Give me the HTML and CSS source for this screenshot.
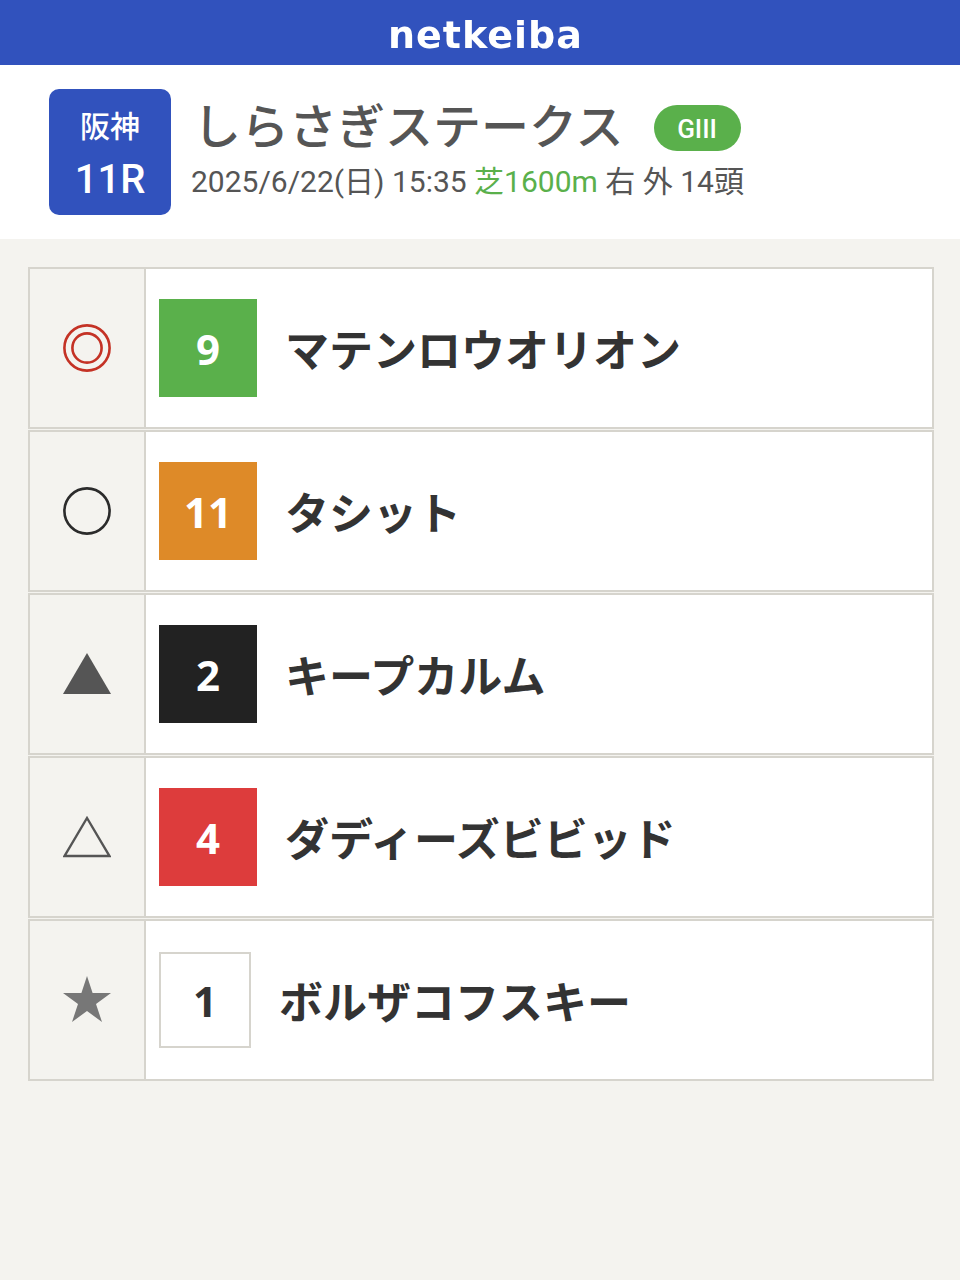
FILE: index.html
```html
<!DOCTYPE html>
<html lang="ja">
<head>
  <meta charset="UTF-8">
  <title>netkeiba</title>
  <link rel="stylesheet" href="styles.css">
</head>
<body>
  <header class="topbar"><span class="logo">netkeiba</span></header>

  <section class="race">
    <div class="place">
      <span class="place-name">阪神</span>
      <span class="place-num">11R</span>
    </div>
    <div class="race-info">
      <div class="race-title">
        <h1>しらさぎステークス</h1>
        <span class="grade">GIII</span>
      </div>
      <p class="race-data">2025/6/22(日) 15:35 <span class="turf">芝1600m</span> 右 外 14頭</p>
    </div>
  </section>

  <main class="picks">
    <div class="pick">
      <div class="mark">
        <svg viewBox="0 0 48 48" width="48" height="48"><circle cx="24" cy="24" r="22.6" fill="none" stroke="#c43225" stroke-width="2.6"/><circle cx="24" cy="24" r="14.6" fill="none" stroke="#c43225" stroke-width="2.6"/></svg>
      </div>
      <div class="horse">
        <span class="num waku-green">9</span>
        <span class="name">マテンロウオリオン</span>
      </div>
    </div>
    <div class="pick">
      <div class="mark">
        <svg viewBox="0 0 48 48" width="48" height="48"><circle cx="24" cy="24" r="22.6" fill="none" stroke="#2b2b2b" stroke-width="2.6"/></svg>
      </div>
      <div class="horse">
        <span class="num waku-orange">11</span>
        <span class="name">タシット</span>
      </div>
    </div>
    <div class="pick">
      <div class="mark">
        <svg viewBox="0 0 48 48" width="48" height="48"><polygon points="24,3 48,44 0,44" fill="#555"/></svg>
      </div>
      <div class="horse">
        <span class="num waku-black">2</span>
        <span class="name">キープカルム</span>
      </div>
    </div>
    <div class="pick">
      <div class="mark">
        <svg viewBox="0 0 48 48" width="48" height="48"><polygon points="24,5 46.4,43 1.6,43" fill="none" stroke="#555" stroke-width="2.4"/></svg>
      </div>
      <div class="horse">
        <span class="num waku-red">4</span>
        <span class="name">ダディーズビビッド</span>
      </div>
    </div>
    <div class="pick">
      <div class="mark">
        <svg viewBox="0 0 48 48" width="48" height="48"><polygon points="24,0 29.6,17 48,17 33,28 39,46 24,35 9,46 15,28 0,17 18.4,17" fill="#777"/></svg>
      </div>
      <div class="horse">
        <span class="num waku-white">1</span>
        <span class="name">ボルザコフスキー</span>
      </div>
    </div>
  </main>
</body>
</html>
```

FILE: styles.css
```css
html, body {
  margin: 0;
  height: 100%;
}
body {
  background-color: #f4f3ef;
  font-family: Roboto, "Noto Sans CJK JP", sans-serif;
  color: #555;
}
.topbar {
  height: 65px;
  background-color: #3152bd;
  display: flex;
  justify-content: center;
  align-items: center;
  padding-left: 11px;
  padding-top: 5px;
  box-sizing: border-box;
}
.logo {
  font-family: "DejaVu Sans", sans-serif;
  font-weight: bold;
  font-size: 38px;
  line-height: 1;
  letter-spacing: 1px;
  color: #fff;
  filter: blur(0.7px);
}
.race {
  height: 174px;
  box-sizing: border-box;
  background-color: #fff;
  padding: 24px 0 0 49px;
  display: flex;
  gap: 20px;
}
.place {
  width: 122px;
  height: 126px;
  background-color: #3152bd;
  border-radius: 10px;
  color: #fff;
  display: flex;
  flex-direction: column;
  align-items: center;
  font-weight: 500;
}
.place-name {
  font-size: 30px;
  line-height: 40px;
  margin-top: 18px;
}
.place-num {
  font-size: 40px;
  line-height: 48px;
  margin-top: 9px;
}
.race-info {
  padding-top: 8px;
}
.race-title {
  display: flex;
  align-items: center;
  gap: 30px;
  height: 62px;
}
.race-title h1 {
  margin: 0 0 0 2px;
  font-size: 48px;
  font-weight: 500;
  line-height: 62px;
  color: #555;
}
.grade {
  width: 87px;
  height: 46px;
  border-radius: 23px;
  background-color: #5ab04b;
  color: #fff;
  font-size: 26px;
  font-weight: 500;
  line-height: 48px;
  text-align: center;
}
.race-data {
  margin: 1px 0 0;
  font-size: 30px;
  line-height: 44px;
  color: #555;
}
.turf {
  color: #5ab04b;
}
.picks {
  margin: 28px 26px 0 28px;
  display: flex;
  flex-direction: column;
  gap: 1px;
}
.pick {
  display: flex;
  height: 162px;
  box-sizing: border-box;
  border: 2px solid #d6d4cd;
  background-color: #d6d4cd;
  gap: 2px;
}
.mark {
  width: 114px;
  background-color: #f4f3ef;
  display: flex;
  justify-content: center;
  align-items: center;
}
.horse {
  flex: 1;
  background-color: #fff;
  display: flex;
  align-items: center;
  padding-left: 13px;
  gap: 28px;
}
.num {
  width: 98px;
  height: 98px;
  box-sizing: border-box;
  display: flex;
  justify-content: center;
  align-items: center;
  color: #fff;
  font-family: "Open Sans", sans-serif;
  font-weight: bold;
  font-size: 42px;
}
.name {
  font-size: 44px;
  font-weight: bold;
  color: #333;
}
.waku-green { background-color: #5ab04b; }
.waku-orange { background-color: #de8a28; }
.waku-black { background-color: #222; }
.waku-red { background-color: #dd3c3c; }
.waku-white {
  width: 92px;
  height: 96px;
  background-color: #fff;
  border: 2px solid #d6d4cd;
  color: #333;
}
```
